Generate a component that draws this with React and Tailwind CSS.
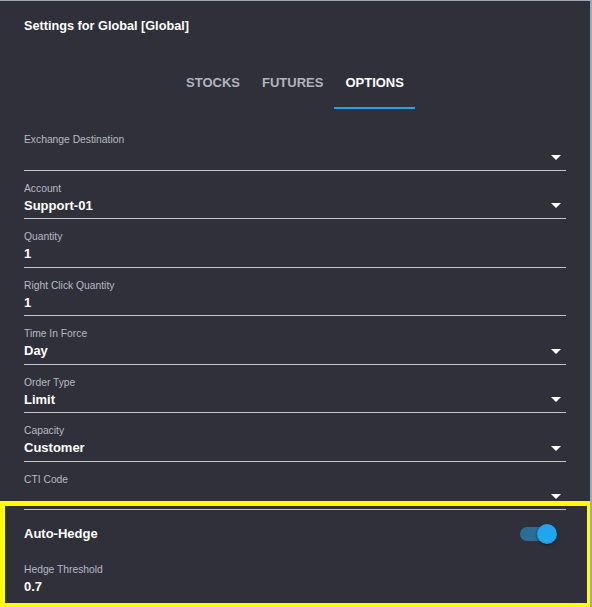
import React from 'react';

const fields = [
  { label: 'Exchange Destination', value: '', select: true },
  { label: 'Account', value: 'Support-01', select: true },
  { label: 'Quantity', value: '1', select: false },
  { label: 'Right Click Quantity', value: '1', select: false },
  { label: 'Time In Force', value: 'Day', select: true },
  { label: 'Order Type', value: 'Limit', select: true },
  { label: 'Capacity', value: 'Customer', select: true },
  { label: 'CTI Code', value: '', select: true },
];

const tabs = ['Stocks', 'Futures', 'Options'];

const Arrow = () => (
  <svg
    className="absolute right-[5px] top-[32.5px]"
    width="10"
    height="5"
    viewBox="0 0 10 5"
  >
    <path d="M0 0h10L5 5z" fill="#ffffff" />
  </svg>
);

const Field = ({ label, value, select }) => (
  <div className="relative h-[48.5px] border-b border-[#c4c4c4] pt-[11px]">
    <div className="text-[10.3px] leading-[14px] text-[#b6bac4]">{label}</div>
    <div className="text-[13px] leading-[20px] font-bold text-white">{value}</div>
    {select && <Arrow />}
  </div>
);

export default function App() {
  return (
    <div
      className="relative w-[592px] h-[607px] overflow-hidden bg-[#2f3039] border-t border-r-2 border-[#a3a8b6]"
      style={{ fontFamily: '"Liberation Sans", Arial, sans-serif' }}
    >
      <div className="px-6 pt-[16.5px] text-[12.7px] leading-[16px] font-bold text-white">
        Settings for Global [Global]
      </div>

      {/* tabs */}
      <div className="mt-[25.5px] flex justify-center">
        {tabs.map((t) => {
          const active = t === 'Options';
          return (
            <div
              key={t}
              className={`flex h-[50px] flex-col ${active ? 'text-white' : 'text-[#b1b4bc]'}`}
            >
              <div className="flex h-[48px] items-center px-[11px] text-[13px] font-bold uppercase">
                {t}
              </div>
              <div className={`h-[2px] w-full ${active ? 'bg-[#1fa3e6]' : ''}`} />
            </div>
          );
        })}
      </div>

      {/* fields */}
      <div className="mt-[13px] px-6">
        {fields.map((f) => (
          <Field key={f.label} {...f} />
        ))}

        <div className="flex h-[48px] items-center justify-between">
          <span className="text-[13px] font-bold text-white">Auto-Hedge</span>
          <div className="relative mr-[9px] h-[20px] w-[37px]">
            <div className="absolute left-0 top-[3px] h-[14px] w-[34px] rounded-full bg-[#2c6d97]" />
            <div className="absolute right-0 top-0 h-[20px] w-[20px] rounded-full bg-[#1fa6ef] shadow-[0_1px_3px_rgba(0,0,0,0.5)]" />
          </div>
        </div>

        <div className="pt-[5px]">
          <div className="text-[10.3px] leading-[14px] text-[#b6bac4]">Hedge Threshold</div>
          <div className="text-[13px] leading-[20px] font-bold text-white">0.7</div>
        </div>
      </div>

      {/* highlight */}
      <div className="absolute left-0 top-[500px] h-[107px] w-[592px] border-[5px] border-[#ffff00]" />
    </div>
  );
}
